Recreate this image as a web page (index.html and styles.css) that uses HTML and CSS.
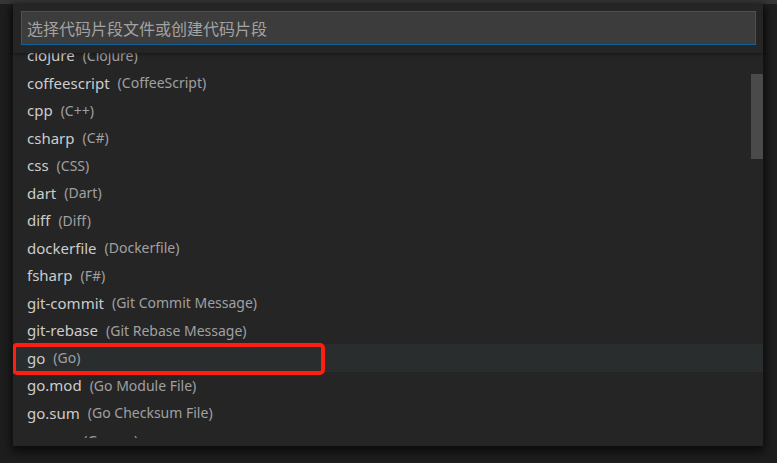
FILE: index.html
```html
<!DOCTYPE html>
<html>
<head>
<meta charset="utf-8">
<link rel="stylesheet" href="styles.css">
</head>
<body>
<div class="topstrip"></div>
<div class="stage">
  <div class="picker">
    <div class="header">
      <div class="input">选择代码片段文件或创建代码片段</div>
    </div>
    <div class="list">
      <div class="rows">
        <div class="row"><span class="label">clojure</span><span class="desc">(Clojure)</span></div>
        <div class="row"><span class="label">coffeescript</span><span class="desc">(CoffeeScript)</span></div>
        <div class="row"><span class="label">cpp</span><span class="desc">(C++)</span></div>
        <div class="row"><span class="label">csharp</span><span class="desc">(C#)</span></div>
        <div class="row"><span class="label">css</span><span class="desc">(CSS)</span></div>
        <div class="row"><span class="label">dart</span><span class="desc">(Dart)</span></div>
        <div class="row"><span class="label">diff</span><span class="desc">(Diff)</span></div>
        <div class="row"><span class="label">dockerfile</span><span class="desc">(Dockerfile)</span></div>
        <div class="row"><span class="label">fsharp</span><span class="desc">(F#)</span></div>
        <div class="row"><span class="label">git-commit</span><span class="desc">(Git Commit Message)</span></div>
        <div class="row"><span class="label">git-rebase</span><span class="desc">(Git Rebase Message)</span></div>
        <div class="row selected"><span class="label">go</span><span class="desc">(Go)</span><span class="mark"></span></div>
        <div class="row"><span class="label">go.mod</span><span class="desc">(Go Module File)</span></div>
        <div class="row"><span class="label">go.sum</span><span class="desc">(Go Checksum File)</span></div>
        <div class="row"><span class="label">groovy</span><span class="desc">(Groovy)</span></div>
      </div>
      <div class="scrollbar"></div>
    </div>
  </div>
</div>
</body>
</html>
```
FILE: styles.css
```css
html, body {
  margin: 0;
  padding: 0;
}
body {
  background: #1e1e1e;
  width: 777px;
  height: 463px;
  overflow: hidden;
  font-family: "Noto Sans", "Noto Sans CJK SC", sans-serif;
}
.topstrip {
  height: 4px;
  background: #363636;
}
.stage {
  padding-left: 13px;
}
.picker {
  width: 750px;
  height: 442px;
  box-sizing: border-box;
  padding-bottom: 8px;
  background: #252526;
  box-shadow: 0 4px 10px 2px rgba(0, 0, 0, 0.65);
  display: flex;
  flex-direction: column;
  position: relative;
}
.header {
  height: 49px;
  flex: none;
  box-sizing: border-box;
  padding: 7px 7px 0 8px;
  position: relative;
  z-index: 2;
  background: #252526;
  box-shadow: 0 1px 4px rgba(0, 0, 0, 0.45);
}
.input {
  height: 34px;
  box-sizing: border-box;
  border: 1px solid #0e639c;
  background: #3c3c3c;
  color: #a3a3a3;
  font-family: "Noto Sans CJK SC", "Noto Sans", sans-serif;
  font-size: 16px;
  line-height: 32px;
  padding-left: 5px;
}
.list {
  flex: 1;
  overflow: hidden;
  position: relative;
}
.rows {
  margin-top: -11.5px;
}
.row {
  height: 27.5px;
  display: flex;
  align-items: center;
  padding-left: 14px;
  position: relative;
  white-space: nowrap;
}
.row.selected {
  background: #2a2d2e;
}
.label {
  color: #cccccc;
  font-size: 15px;
}
.desc {
  color: #a0a0a0;
  font-size: 14px;
  margin-left: 8px;
}
.mark {
  position: absolute;
  left: -1px;
  top: -1.5px;
  width: 313px;
  height: 32px;
  box-sizing: border-box;
  border: 4px solid #ff1e10;
  border-radius: 5px;
}
.scrollbar {
  position: absolute;
  right: 0;
  top: 21px;
  width: 12px;
  height: 85px;
  background: #4a4a4a;
}
```
